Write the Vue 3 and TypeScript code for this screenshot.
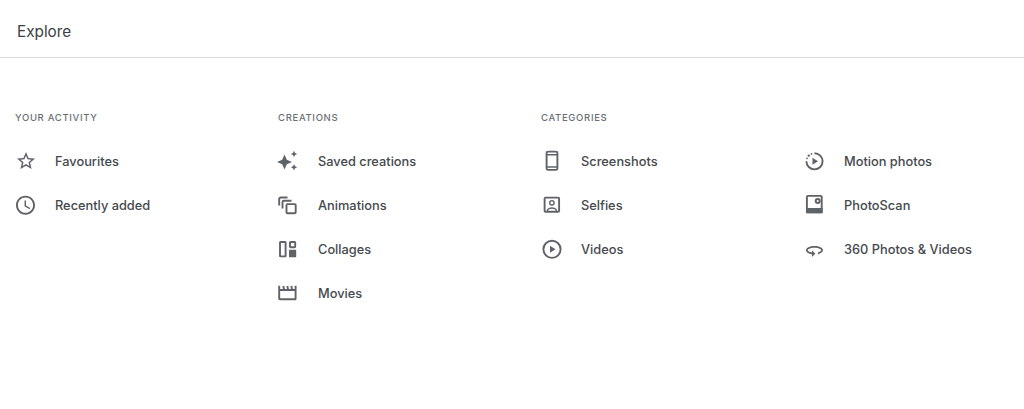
<script setup lang="ts">
interface Item {
  name: string
  icon: string
}

interface Group {
  title: string
  items: Item[]
}

const groups: Group[] = [
  {
    title: 'Your activity',
    items: [
      { name: 'Favourites', icon: 'star' },
      { name: 'Recently added', icon: 'clock' }
    ]
  },
  {
    title: 'Creations',
    items: [
      { name: 'Saved creations', icon: 'sparkle' },
      { name: 'Animations', icon: 'animation' },
      { name: 'Collages', icon: 'collage' },
      { name: 'Movies', icon: 'movie' }
    ]
  },
  {
    title: 'Categories',
    items: [
      { name: 'Screenshots', icon: 'phone' },
      { name: 'Selfies', icon: 'selfie' },
      { name: 'Videos', icon: 'play' }
    ]
  },
  {
    title: '',
    items: [
      { name: 'Motion photos', icon: 'motion' },
      { name: 'PhotoScan', icon: 'scan' },
      { name: '360 Photos & Videos', icon: 'pano' }
    ]
  }
]
</script>

<template>
  <div class="page">
    <header class="top">Explore</header>
    <main class="columns">
      <section v-for="group in groups" :key="group.items[0].name" class="column">
        <h2 class="title">{{ group.title }}</h2>
        <a v-for="item in group.items" :key="item.name" class="row">
          <svg class="icon" viewBox="0 0 24 24" aria-hidden="true">
            <path v-if="item.icon === 'star'" transform="translate(1.2 1.2) scale(.9)" d="M22 9.24l-7.19-.62L12 2 9.19 8.63 2 9.24l5.46 4.73L5.82 21 12 17.27 18.18 21l-1.63-7.03L22 9.24zM12 15.4l-3.76 2.27 1-4.28-3.32-2.88 4.38-.38L12 6.1l1.71 4.04 4.38.38-3.32 2.88 1 4.28L12 15.4z" />
            <path v-else-if="item.icon === 'clock'" transform="translate(.1 .8) scale(.95)" d="M11.99 2C6.47 2 2 6.48 2 12s4.47 10 9.99 10C17.52 22 22 17.52 22 12S17.52 2 11.99 2zM12 20c-4.42 0-8-3.58-8-8s3.58-8 8-8 8 3.58 8 8-3.58 8-8 8zm.5-13H11v6l5.25 3.15.75-1.23-4.5-2.67z" />
            <path v-else-if="item.icon === 'sparkle'" d="M7.500 5.500l2.300 5.200 5.200 2.300-5.200 2.300-2.300 5.200-2.300-5.200L0 13l5.200-2.300zM17 1.800l1 2.200 2.200 1-2.200 1-1 2.200-1-2.200-2.200-1 2.200-1zM17 15.100l1 2.200 2.200 1-2.200 1-1 2.200-1-2.200-2.200-1 2.200-1z" />
            <g v-else-if="item.icon === 'animation'" class="line">
              <path d="M2.200 12.500V6A1.500 1.500 0 0 1 3.700 4.500H10.500" />
              <path d="M5.500 15.500V9.300A1.500 1.500 0 0 1 7 7.800H14.500" />
              <rect x="9.500" y="11.100" width="9.200" height="9.200" rx="1" />
            </g>
            <g v-else-if="item.icon === 'collage'">
              <rect class="line" x="3" y="5" width="5.600" height="14.400" rx=".6" />
              <rect class="line" x="13" y="5" width="5.200" height="5.200" rx=".6" />
              <rect x="12" y="12.800" width="7.200" height="7.500" rx=".6" />
            </g>
            <g v-else-if="item.icon === 'movie'" class="line">
              <rect x="2.200" y="9" width="16.400" height="9.300" rx=".6" />
              <path d="M2.200 9V4.700M6.300 5l.8 3.800M10.300 5l.8 3.800M14.300 5l.8 3.800M18.600 9V4.700" />
            </g>
            <g v-else-if="item.icon === 'phone'" class="line">
              <rect x="6.600" y="2.600" width="10.800" height="18.300" rx="1.500" />
              <path class="thin" d="M6.600 5.800h10.800M6.600 18h10.800" />
            </g>
            <g v-else-if="item.icon === 'selfie'" class="line">
              <rect x="4.600" y="4.600" width="14.500" height="14.200" rx="1" />
              <circle class="thin" cx="11.900" cy="9.800" r="2.200" />
              <path class="thin" d="M7.500 18.500v-1c0-1.500 2.500-2.500 4.400-2.500s4.400 1 4.400 2.500v1" />
            </g>
            <g v-else-if="item.icon === 'play'">
              <circle class="line" cx="12" cy="12.300" r="8.600" />
              <path d="M10 8.800l5.500 3.500-5.500 3.500z" />
            </g>
            <g v-else-if="item.icon === 'motion'">
              <path class="line" d="M11.500 4.200a8.100 8.100 0 1 1-8.100 8.100" />
              <circle cx="5.800" cy="6.600" r="1.200" />
              <circle cx="4" cy="9.300" r=".9" />
              <circle cx="8.500" cy="4.800" r=".9" />
              <path d="M9.500 8.800l5.500 3.500-5.500 3.500z" />
            </g>
            <g v-else-if="item.icon === 'scan'">
              <rect class="line" x="3.900" y="2.900" width="14.800" height="16.500" rx="1" />
              <rect x="3" y="15" width="16.700" height="5.300" rx=".6" />
              <path fill-rule="evenodd" d="M14.700 5a3 3 0 1 1 0 6 3 3 0 0 1 0-6zm0 2a1 1 0 1 0 0 2 1 1 0 0 0 0-2z" />
            </g>
            <path v-else transform="translate(1.300 3.050) scale(.85)" d="M12 7C6.480 7 2 9.240 2 12c0 2.240 2.940 4.130 7 4.770V20l4-4-4-4v2.730c-3.150-.56-5-1.900-5-2.730 0-1.060 3.040-3 8-3s8 1.940 8 3c0 .73-1.460 1.890-4 2.530v2.050c3.530-.77 6-2.530 6-4.580 0-2.760-4.480-5-10-5z" />
          </svg>
          <span class="label">{{ item.name }}</span>
        </a>
      </section>
    </main>
  </div>
</template>

<style scoped>
.page {
  font-family: Inter, "Noto Sans", sans-serif;
  background: #fff;
  color: #3c4043;
}

.top {
  height: 58px;
  padding-left: 17px;
  padding-top: 5px;
  display: flex;
  align-items: center;
  font-size: 15.3px;
  color: #3c4043;
  border-bottom: 1px solid #dadce0;
  box-sizing: border-box;
}

.columns {
  display: grid;
  grid-template-columns: repeat(4, 263px);
  padding: 48px 0 0 14px;
}

.title {
  height: 21px;
  margin: 1px 0 0 0;
  padding-left: 1px;
  font-size: 9.5px;
  line-height: 21px;
  font-weight: 500;
  letter-spacing: 0.68px;
  text-transform: uppercase;
  color: #6b6f74;
}

.row {
  display: flex;
  align-items: center;
  gap: 17px;
  height: 44px;
}

.title + .row {
  margin-top: 11px;
}

.icon {
  width: 24px;
  height: 24px;
  fill: #5f6368;
  flex: none;
}

.line {
  fill: none;
  stroke: #5f6368;
  stroke-width: 1.9;
}

.thin {
  stroke-width: 1.4;
}

.label {
  font-size: 12.8px;
  font-weight: 500;
  color: #46494d;
}
</style>

<style>
html,
body {
  background: #fff;
}
</style>
